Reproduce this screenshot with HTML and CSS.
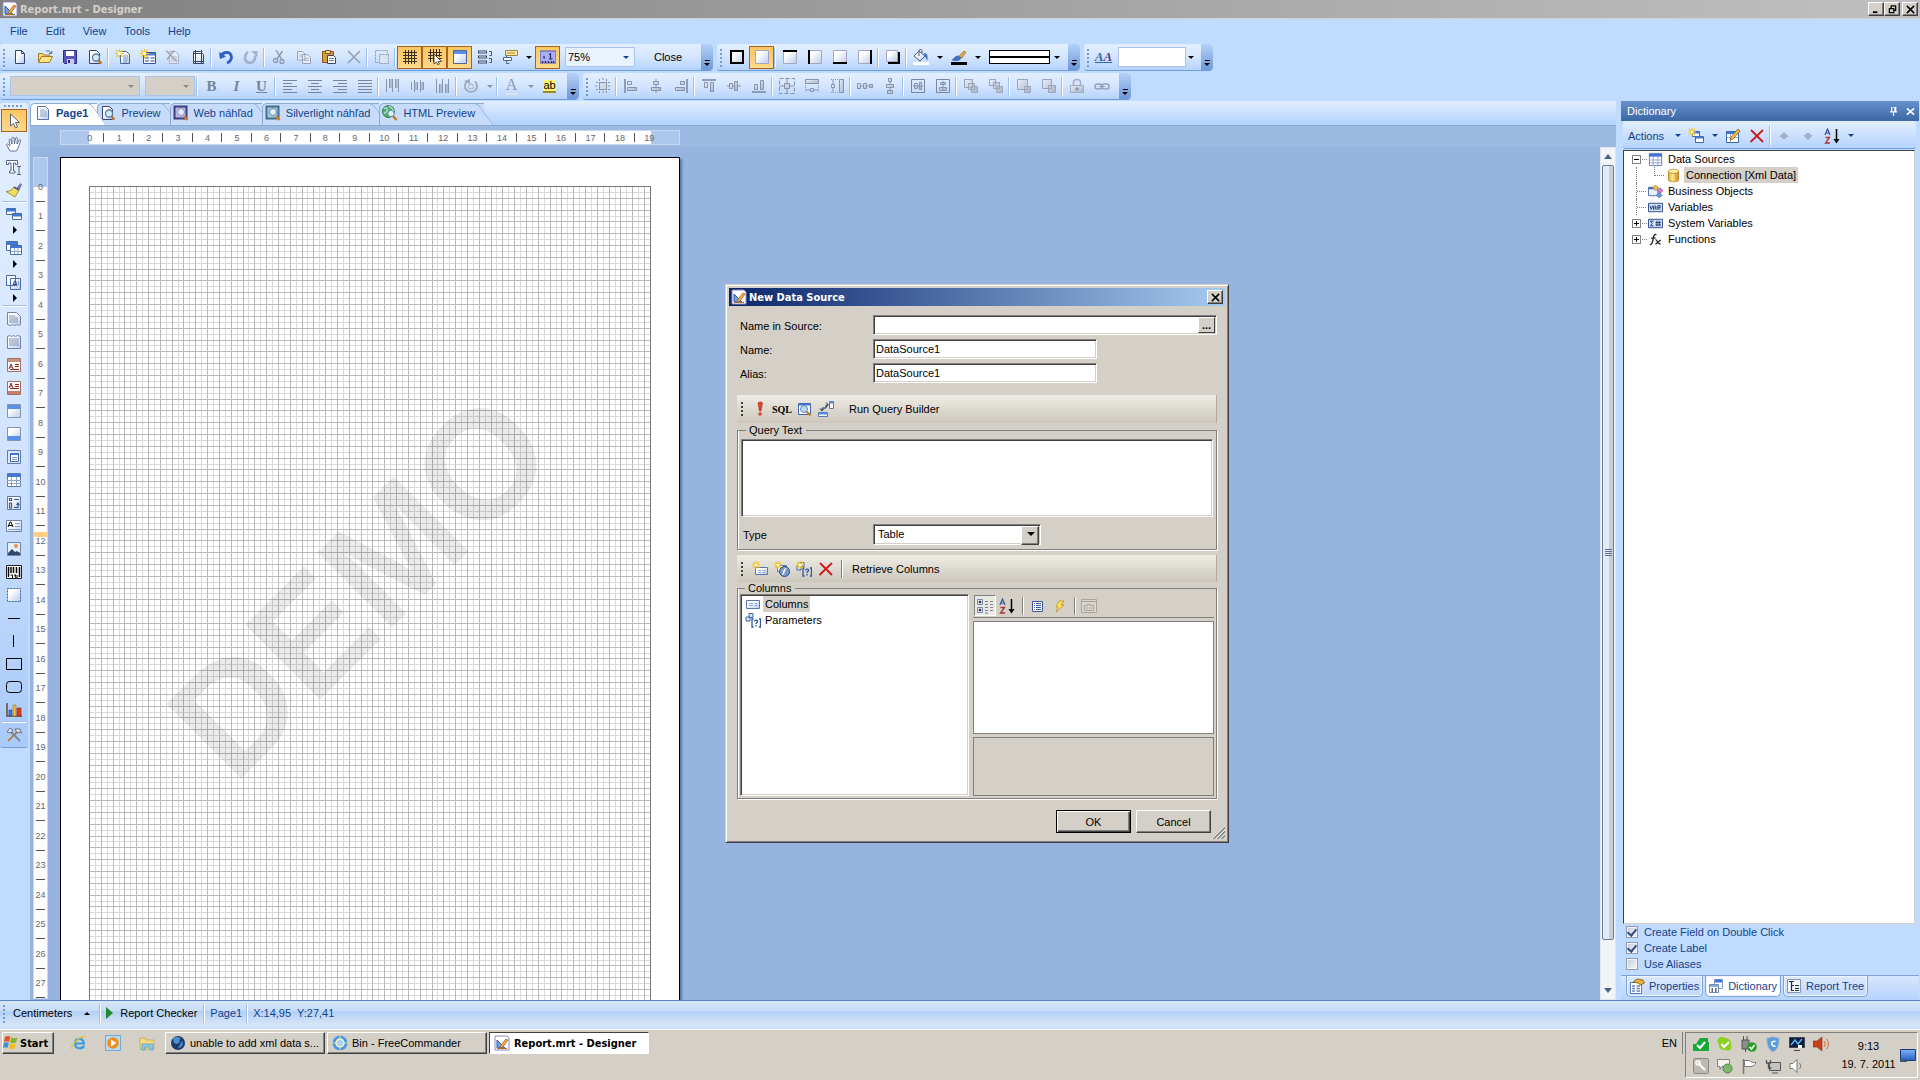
FILE: index.html
```html
<!DOCTYPE html>
<html lang="sk">
<head>
    <meta charset="utf-8">
    <title>Report.mrt - Designer</title>
    <link rel="stylesheet" href="styles.css">
</head>
<body>

<!-- Icon sprite -->
<svg class="sprite" aria-hidden="true">
    <defs>
        <linearGradient id="gPage" x1="0" y1="0" x2="1" y2="1"><stop offset="0.3" stop-color="#fff"/><stop offset="1" stop-color="#b9cbe8"/></linearGradient>
        <linearGradient id="gBlue" x1="0" y1="0" x2="0" y2="1"><stop offset="0" stop-color="#7fb0f5"/><stop offset="1" stop-color="#2b5fc0"/></linearGradient>
        <linearGradient id="gGold" x1="0" y1="0" x2="1" y2="0"><stop offset="0" stop-color="#e0a020"/><stop offset="0.4" stop-color="#ffec90"/><stop offset="1" stop-color="#c88610"/></linearGradient>
        <linearGradient id="gGray" x1="0" y1="0" x2="1" y2="1"><stop offset="0" stop-color="#e8eef8"/><stop offset="1" stop-color="#a9b4c6"/></linearGradient>
    </defs>
    <symbol id="app" viewBox="0 0 16 16"><path d="M1 1h12l2 2v12H1z" fill="#fff" stroke="#8b8bc0"/><path d="M3 5v8h8z" fill="#6aa2e8" stroke="#2b5fa8"/><path d="M7 10l5-6 2 1-5 7-3 1z" fill="#f4a640" stroke="#a0601c" stroke-width=".7"/><path d="M3 13.500h10" stroke="#b07020"/></symbol>
    <symbol id="new" viewBox="0 0 16 16"><path d="M3.500 1.500h6l3 3v10h-9z" fill="url(#gPage)" stroke="#34466e"/><path d="M9.500 1.500v3h3" fill="none" stroke="#34466e"/></symbol>
    <symbol id="open" viewBox="0 0 16 16"><path d="M1.500 13V4.500h4l1 1.500h6v2" fill="#f6d774" stroke="#a67c20"/><path d="M1.500 13.500l3-6h11l-3 6z" fill="#ffe48a" stroke="#a67c20"/><path d="M9 2.500c2-1.500 4-.5 4.500 1.500M14.800 2v2.500h-2.500" fill="none" stroke="#41609a"/></symbol>
    <symbol id="save" viewBox="0 0 16 16"><path d="M1.500 1.500h13v13h-12l-1-1z" fill="#5a58b8" stroke="#2c2b80"/><path d="M4 2h8v5H4z" fill="#fff"/><path d="M5 10h7v5H5z" fill="#c9cbe8"/><path d="M6 11h2v3H6z" fill="#2c2b80"/></symbol>
    <symbol id="preview" viewBox="0 0 16 16"><path d="M2.500 1.500h7l3 3v10h-10z" fill="url(#gPage)" stroke="#34466e"/><circle cx="9" cy="8.500" r="3.500" fill="#d4ecfa" fill-opacity=".9" stroke="#5a7da8" stroke-width="1.300"/><path d="M11.500 11.500l3 3" stroke="#c07820" stroke-width="2.400"/></symbol>
    <symbol id="star" viewBox="0 0 8 8"><path d="M4 0v8M0 4h8M1 1l6 6M7 1L1 7" stroke="#f0c020" stroke-width="1.100"/><circle cx="4" cy="4" r="1.500" fill="#fffbc0"/></symbol>
    <symbol id="newpage" viewBox="0 0 16 16"><path d="M5.500 2.500h6l3 3v9h-9z" fill="url(#gPage)" stroke="#4a6598"/><path d="M8 7h5M8 9h5M8 11h5M8 13h4" stroke="#7d97c4"/><use href="#star" width="9" height="9"/></symbol>
    <symbol id="newform" viewBox="0 0 16 16"><path d="M3.500 3.500h12v11h-12z" fill="#fff" stroke="#2e559c"/><path d="M4 4h11v2.500H4z" fill="#4f80d4"/><path d="M5 9h4M10.500 9h4M5 12h4M10.500 12h4" stroke="#6884b4" stroke-width="1.500"/><use href="#star" width="9" height="9"/></symbol>
    <symbol id="delpage" viewBox="0 0 16 16"><path d="M4.500 2.500h6l3 3v9h-9z" fill="#e4ebf5" stroke="#a9b2c2"/><path d="M6 8h6M6 10h6M6 12h6" stroke="#b5bdca"/><path d="M1 1.500l11 11M9 1.500l-7 9" stroke="#9ca5b5" stroke-width="1.300"/></symbol>
    <symbol id="pagesetup" viewBox="0 0 16 16"><path d="M3.500 2.500h7l3 3v9h-10z" fill="url(#gPage)" stroke="#34466e"/><path d="M5.500 1v14M11.500 1v14M3 4.500h9M3 12.500h11" stroke="#34466e"/></symbol>
    <symbol id="undo" viewBox="0 0 16 16"><path d="M3 7c2-4 8-5 10-1 1.500 3.500-1 7-4 8" fill="none" stroke="#2d5fc4" stroke-width="2.800"/><path d="M1 3l1 7 6-2.500z" fill="#2d5fc4"/></symbol>
    <symbol id="redo" viewBox="0 0 16 16"><path d="M5 3c-4 3-4 9 0 10.500s8-2 7-7" fill="none" stroke="#a3b2ca" stroke-width="2.600"/><path d="M8 2h6.500v6z" fill="#a3b2ca"/></symbol>
    <symbol id="cut" viewBox="0 0 16 16"><path d="M5 1l5.500 9M11.500 2L6 10" stroke="#8b97ab" stroke-width="1.400"/><circle cx="4.500" cy="11.500" r="2" fill="none" stroke="#8b97ab" stroke-width="1.300"/><circle cx="11" cy="12.500" r="2" fill="none" stroke="#8b97ab" stroke-width="1.300"/></symbol>
    <symbol id="copy" viewBox="0 0 16 16"><path d="M1.500 2.500h5l2.500 2.500v6H1.500zM6.500 5.500h5l3 3v6h-8z" fill="#e8eef8" stroke="#97a3b8"/><path d="M3 6h3M3 8h3M8 9.500h5M8 11.500h5" stroke="#b0bac9"/></symbol>
    <symbol id="paste" viewBox="0 0 16 16"><path d="M1.500 2.500h11v11h-11z" fill="#d99a3c" stroke="#82561a"/><path d="M4.500 1.500h5v3h-5z" fill="#f0dc90" stroke="#82561a"/><path d="M6.500 6.500h6l2 2v6h-8z" fill="#fff" stroke="#34466e"/><path d="M8 9.500h5M8 11.500h5" stroke="#6884b4"/></symbol>
    <symbol id="del" viewBox="0 0 16 16"><path d="M2 2l12 12M14 2L2 14" stroke="#97a0b0" stroke-width="1.600"/></symbol>
    <symbol id="selall" viewBox="0 0 16 16"><path d="M1.500 1.500h12v12h-12z" fill="none" stroke="#8f9bae" stroke-dasharray="2 1"/><path d="M5.500 5.500h9v9h-9z" fill="#dbe4f2" stroke="#8f9bae" stroke-dasharray="2 1"/></symbol>
    <symbol id="grid" viewBox="0 0 16 16"><path d="M3.500 1v14M6.500 1v14M9.500 1v14M12.500 1v14M1 3.500h14M1 6.500h14M1 9.500h14M1 12.500h14" stroke="#3a3020"/></symbol>
    <symbol id="snap" viewBox="0 0 16 16"><path d="M3.500 0v13M6.500 0v13M9.500 0v13M12.500 0v8M1 3.500h14M1 6.500h14M1 9.500h14" stroke="#3a3020"/><path d="M7 5v10l2.500-2 1.500 3 1.500-1-1.500-2.500h3.500z" fill="#fff" stroke="#3a3020" stroke-width=".8"/></symbol>
    <symbol id="headers" viewBox="0 0 16 16"><path d="M1.500 1.500h13v13h-13z" fill="url(#gPage)" stroke="#4a6598"/><path d="M2 2h12v3H2z" fill="#5a8fe8"/></symbol>
    <symbol id="order" viewBox="0 0 16 16"><path d="M1 3h9M1 8h9M1 13h9" stroke="#3c4862" stroke-width="3"/><path d="M2 3h7M2 8h7M2 13h7" stroke="#eef3fb"/><path d="M12 2.500h2.500v4H12.500M12 9.500h2.500v4H12.500" fill="none" stroke="#3c5a92"/></symbol>
    <symbol id="labels" viewBox="0 0 16 16"><path d="M3.500 1.500h12v5h-12z" fill="#ffe9a0" stroke="#a88432"/><path d="M5 4h8" stroke="#a88432"/><path d="M1.500 8.500h8v3h-8z" fill="#fff" stroke="#4a6598"/><path d="M4.500 6.500v2M4.500 11.500v3h3" fill="none" stroke="#4a6598"/></symbol>
    <symbol id="measure" viewBox="0 0 16 16"><path d="M0 2h16v12H0z" fill="#a8aef4" stroke="#5257b0"/><path d="M2.500 14v-2M5.500 14v-2M8.500 14v-2M11.500 14v-2M13.500 14v-2M10.500 4v6M9 5.500l1.500-1M9 10h3.500M4 7v2h1" fill="none" stroke="#26266c" stroke-width="1.200"/></symbol>

    <!-- Text formatting -->
    <symbol id="al" viewBox="0 0 16 16"><path d="M1 2.500h14M1 5.500h9M1 8.500h14M1 11.500h9M1 14.500h14" stroke="#76849c"/></symbol>
    <symbol id="ac" viewBox="0 0 16 16"><path d="M1 2.500h14M4 5.500h8M1 8.500h14M4 11.500h8M1 14.500h14" stroke="#76849c"/></symbol>
    <symbol id="ar" viewBox="0 0 16 16"><path d="M1 2.500h14M6 5.500h9M1 8.500h14M6 11.500h9M1 14.500h14" stroke="#76849c"/></symbol>
    <symbol id="aj" viewBox="0 0 16 16"><path d="M1 2.500h14M1 5.500h14M1 8.500h14M1 11.500h14M1 14.500h14" stroke="#76849c"/></symbol>
    <symbol id="vt" viewBox="0 0 16 16"><path d="M1.500 1v13M4.500 1v9M7.500 1v13M10.500 1v9M13.500 1v13M6 1v9M12 1v9" stroke="#8a96aa"/></symbol>
    <symbol id="vm" viewBox="0 0 16 16"><path d="M1.500 4v8M4.500 2v12M6 4v8M7.500 4v8M10.500 2v12M12 4v8M13.500 4v8" stroke="#8a96aa"/></symbol>
    <symbol id="vb" viewBox="0 0 16 16"><path d="M1.500 1v14M4.500 6v9M6 6v9M7.500 1v14M10.500 6v9M12 6v9M13.500 1v14" stroke="#8a96aa"/></symbol>
    <symbol id="rotate" viewBox="0 0 16 16"><path d="M4 3.500a6 6 0 1 0 8 0" fill="none" stroke="#a0abbc" stroke-width="2"/><circle cx="8" cy="8.500" r="2.500" fill="none" stroke="#a0abbc"/><path d="M1 3l6-2v5z" fill="#a0abbc"/></symbol>

    <!-- Borders and brushes -->
    <symbol id="ball" viewBox="0 0 16 16"><path d="M2 2h12v12H2z" fill="url(#gPage)" stroke="#000" stroke-width="2"/></symbol>
    <symbol id="bnone" viewBox="0 0 16 16"><path d="M1.500 1.500h13v13h-13z" fill="url(#gPage)" stroke="#a7a4c4"/></symbol>
    <symbol id="bt" viewBox="0 0 16 16"><use href="#bnone"/><path d="M1 2h14" stroke="#000" stroke-width="2"/></symbol>
    <symbol id="bl" viewBox="0 0 16 16"><use href="#bnone"/><path d="M2 1v14" stroke="#000" stroke-width="2"/></symbol>
    <symbol id="bb" viewBox="0 0 16 16"><use href="#bnone"/><path d="M1 14h14" stroke="#000" stroke-width="2"/></symbol>
    <symbol id="br" viewBox="0 0 16 16"><use href="#bnone"/><path d="M14 1v14" stroke="#000" stroke-width="2"/></symbol>
    <symbol id="bsh" viewBox="0 0 16 16"><path d="M3 3h12v12H3z" fill="#000"/><path d="M1.500 1.500h11v11h-11z" fill="url(#gPage)" stroke="#a7a4c4"/></symbol>
    <symbol id="fill" viewBox="0 0 16 16"><path d="M0 13h16v3H0z" fill="#fff"/><path d="M6 2l6 5-5 5-6-5z" fill="url(#gPage)" stroke="#4a5a80"/><path d="M6 7V1.500c0-1.500 3-1.500 3 0V4" fill="none" stroke="#4a5a80"/><path d="M11 4c3 0 4 2 3.500 7-1.500 0-1.500-3-3-4z" fill="#3f72c8"/></symbol>
    <symbol id="pen" viewBox="0 0 16 16"><path d="M0 13h16v3H0z" fill="#000"/><path d="M1 11c2 0 2-4 6-4l3 2c-1 3-5 3-9 2z" fill="#3f72c8" stroke="#25508e" stroke-width=".6"/><path d="M8 7l5-5 2 1-4 6z" fill="#e2a84c" stroke="#8a5c1c" stroke-width=".6"/></symbol>

    <!-- Alignment, all dimmed -->
    <symbol id="d0" viewBox="0 0 16 16"><path d="M4.500 4.500h7v7h-7z" fill="#d5dbe6" stroke="#8793a8"/><path d="M1 4.500h14M1 11.500h14M4.500 1v14M11.500 1v14M8 0v3M8 13v3M0 8h3M13 8h3" stroke="#8793a8" stroke-dasharray="2 1"/></symbol>
    <symbol id="d1" viewBox="0 0 16 16"><path d="M2 1v14" stroke="#7785a0" stroke-width="1.500"/><path d="M4.500 3.500h4v3h-4zM4.500 9.500h9v3h-9z" fill="url(#gGray)" stroke="#8793a8"/></symbol>
    <symbol id="d2" viewBox="0 0 16 16"><path d="M8 1v14" stroke="#8793a8"/><path d="M5.500 3.500h5v3h-5zM3.500 9.500h9v3h-9z" fill="url(#gGray)" stroke="#8793a8"/></symbol>
    <symbol id="d3" viewBox="0 0 16 16"><path d="M14 1v14" stroke="#7785a0" stroke-width="1.500"/><path d="M7.500 3.500h4v3h-4zM2.500 9.500h9v3h-9z" fill="url(#gGray)" stroke="#8793a8"/></symbol>
    <symbol id="d4" viewBox="0 0 16 16"><path d="M1 2h14" stroke="#7785a0" stroke-width="1.500"/><path d="M3.500 4.500h3v5h-3zM9.500 4.500h3v9h-3z" fill="url(#gGray)" stroke="#8793a8"/></symbol>
    <symbol id="d5" viewBox="0 0 16 16"><path d="M1 8h14" stroke="#8793a8"/><path d="M3.500 5.500h3v5h-3zM8.500 3.500h3v9h-3z" fill="url(#gGray)" stroke="#8793a8"/></symbol>
    <symbol id="d6" viewBox="0 0 16 16"><path d="M1 14h14" stroke="#7785a0" stroke-width="1.500"/><path d="M3.500 6.500h3v5h-3zM9.500 2.500h3v9h-3z" fill="url(#gGray)" stroke="#8793a8"/></symbol>
    <symbol id="d7" viewBox="0 0 16 16"><path d="M.5 .5h15v15H.5z" fill="none" stroke="#8793a8" stroke-dasharray="4 2"/><path d="M5.500 5.500h5v5h-5zM8 1v4M8 11v4M1 8h4M11 8h4" fill="url(#gGray)" stroke="#8793a8"/></symbol>
    <symbol id="d8" viewBox="0 0 16 16"><path d="M1.500 1.500h13v4h-13z" fill="url(#gGray)" stroke="#8793a8"/><path d="M1.500 7v7M14.500 7v7" stroke="#8793a8" stroke-dasharray="1 1"/><path d="M6.500 10.500h3v3h-3zM2 12h4M10 12h4" fill="none" stroke="#8793a8"/></symbol>
    <symbol id="d9" viewBox="0 0 16 16"><path d="M10.500 1.500h4v13h-4z" fill="url(#gGray)" stroke="#8793a8"/><path d="M2 1.500h7M2 14.500h7" stroke="#8793a8" stroke-dasharray="1 1"/><path d="M2.500 6.500h3v3h-3zM4 2v4M4 10v4" fill="none" stroke="#8793a8"/></symbol>
    <symbol id="d10" viewBox="0 0 16 16"><path d="M0 8h16" stroke="#8793a8"/><path d="M.5 5.500h3v5h-3zM6.500 5.500h3v5h-3zM12.500 6.500h3v3h-3z" fill="url(#gGray)" stroke="#8793a8"/></symbol>
    <symbol id="d11" viewBox="0 0 16 16"><path d="M8 0v16" stroke="#8793a8"/><path d="M6.500 .5h3v3h-3zM4.500 6.500h7v3h-7zM5.500 12.500h5v3h-5z" fill="url(#gGray)" stroke="#8793a8"/></symbol>
    <symbol id="d12" viewBox="0 0 16 16"><path d="M1.500 1.500h13v13h-13z" fill="none" stroke="#7785a0"/><path d="M3 8h10M4.500 5.500h3v5h-3zM9.500 4.500h2v7h-2z" fill="url(#gGray)" stroke="#8793a8"/></symbol>
    <symbol id="d13" viewBox="0 0 16 16"><path d="M1.500 1.500h13v13h-13z" fill="none" stroke="#7785a0"/><path d="M8 3v10M5.500 4.500h5v2h-5zM4.500 9.500h7v3h-7z" fill="url(#gGray)" stroke="#8793a8"/></symbol>
    <symbol id="d14" viewBox="0 0 16 16"><path d="M8.500 8.500h6v6h-6zM5.500 5.500h6v6h-6zM1.500 1.500h8v8h-8z" fill="url(#gGray)" stroke="#9aa5b8"/></symbol>
    <symbol id="d15" viewBox="0 0 16 16"><path d="M1.500 1.500h6v6h-6zM8.500 8.500h6v6h-6zM5.500 4.500h6v6h-6z" fill="url(#gGray)" stroke="#9aa5b8"/></symbol>
    <symbol id="d16" viewBox="0 0 16 16"><path d="M8.500 8.500h6v6h-6zM1.500 1.500h10v10h-10z" fill="url(#gGray)" stroke="#9aa5b8"/></symbol>
    <symbol id="d17" viewBox="0 0 16 16"><path d="M1.500 1.500h9v9h-9zM7.500 7.500h7v7h-7z" fill="url(#gGray)" stroke="#9aa5b8"/></symbol>
    <symbol id="lock" viewBox="0 0 16 16"><path d="M4.500 7V4.500c0-4 7-4 7 0V7" fill="none" stroke="#a2acbc" stroke-width="1.500"/><path d="M1.500 7.500h13v7h-13z" fill="url(#gGray)" stroke="#a2acbc"/><path d="M8 9v4M6 11h4" stroke="#7d899d"/></symbol>
    <symbol id="link" viewBox="0 0 16 16"><rect x="1" y="6" width="7" height="5" rx="2.500" fill="none" stroke="#97a2b5" stroke-width="1.500"/><rect x="8" y="6" width="7" height="5" rx="2.500" fill="none" stroke="#97a2b5" stroke-width="1.500"/><path d="M5 8.500h6" stroke="#97a2b5"/></symbol>

    <!-- Tabs -->
    <symbol id="tpage" viewBox="0 0 16 16"><path d="M2.500 1.500h8l3 3v10h-11z" fill="url(#gPage)" stroke="#5a74a8"/><path d="M5 5h5M5 7h7M5 9h7M5 11h7" stroke="#8ba3cc"/></symbol>
    <symbol id="tweb" viewBox="0 0 16 16"><path d="M1.500 1.500h12v12h-12z" fill="#b9b8e2" stroke="#3f3b84" stroke-width="2"/><circle cx="8" cy="7" r="3.500" fill="#dcecfa" stroke="#8c90b8"/><path d="M11 11l3.500 4" stroke="#d27c20" stroke-width="2.400"/></symbol>
    <symbol id="tsilver" viewBox="0 0 16 16"><path d="M1.500 1.500h12v12h-12z" fill="#a8cbe2" stroke="#3f7088" stroke-width="2"/><circle cx="8" cy="7" r="3.500" fill="#e4f4fc" stroke="#5a86a8"/><path d="M11 11l3.500 4" stroke="#d27c20" stroke-width="2.400"/></symbol>
    <symbol id="thtml" viewBox="0 0 16 16"><circle cx="6.500" cy="6.500" r="6" fill="#4fae54" stroke="#2c7a48"/><path d="M2 4c3-3 4 0 3 2s-2 1-3 3M7 1c2 1 4 3 5 5" fill="none" stroke="#a8d8f0" stroke-width="1.500"/><circle cx="9" cy="8.500" r="3.200" fill="#dcf0fa" stroke="#6a8cae"/><path d="M11 11l3.500 4" stroke="#c07820" stroke-width="2.400"/></symbol>

    <!-- Palette -->
    <symbol id="cursor" viewBox="0 0 16 16"><path d="M4.500 1v12l3-2.500 2 4.500 2-1-2-4.500h4z" fill="#fff" stroke="#56617c"/></symbol>
    <symbol id="hand" viewBox="0 0 16 16"><path d="M4 15l-3.500-6c0-1 1-1.500 2-.5L4 10 3 4c0-1 1.500-1 2 0l1 4V2c0-1 2-1 2 0l.5 6L9.500 2c.5-1 2-1 1.800.5L11 8l2-4c1-1 2 0 1.500 1l-2 6-2 4z" fill="#fff" stroke="#56678e" stroke-width=".9"/></symbol>
    <symbol id="texttool" viewBox="0 0 16 16"><path d="M.5 1.500h11v4H9.500v-1.500h-2v8h1.500v2H3.500v-2H5V4H2.500v1.500H.5z" fill="#fff" stroke="#56678e"/><path d="M11 7.500h4M11 15.500h4M13 7.500v8" stroke="#56678e"/></symbol>
    <symbol id="broom" viewBox="0 0 16 16"><path d="M11 6l3.500-4.500 1 1L13 8z" fill="#8487b0" stroke="#55587c" stroke-width=".7"/><path d="M8 5l5 3-4 7L0 9.500c4 0 6-2 8-4.500z" fill="#f2da5a" stroke="#8d7d3a" stroke-width=".8"/><path d="M8 5l5 3" stroke="#55587c" stroke-width="1.500"/></symbol>
    <symbol id="bands" viewBox="0 0 16 16"><path d="M.5 2.500h9v6h-9z" fill="#fff" stroke="#486ca8"/><path d="M1 3h8v2.500H1z" fill="#3f76d8"/><path d="M6.500 7.500h9v6h-9z" fill="#fff" stroke="#486ca8"/><path d="M7 8h8v2.500H7z" fill="#3f76d8"/></symbol>
    <symbol id="cross" viewBox="0 0 16 16"><path d="M.5 1.500h11v9h-11z" fill="#fff" stroke="#486ca8"/><path d="M1 2h10v3H1z" fill="#3f76d8"/><path d="M4.500 5.500h11v9h-11z" fill="#fff" stroke="#486ca8"/><path d="M5 6h10v2H5z" fill="#3f76d8"/><path d="M5 11.500h10M8.500 8v6M12 8v6" stroke="#90a8d0"/></symbol>
    <symbol id="comps" viewBox="0 0 16 16"><path d="M.5 1.500h9v10h-9zM4.500 4.500h10v11h-10z" fill="url(#gPage)" stroke="#486ca8"/><path d="M7 12l1.500-5h1L11 12M7.500 10.500h3M12 8h1M12 10h1" fill="none" stroke="#244a94"/></symbol>
    <symbol id="rtitle" viewBox="0 0 16 16"><path d="M1.500 1.500h9l4 4v8l-2 1-2-1-2 1-2-1-2 1-3-1z" fill="url(#gPage)" stroke="#7085a8"/><path d="M3 5h6M3 7h9M3 9h9M3 11h9" stroke="#7f92b2"/></symbol>
    <symbol id="rsum" viewBox="0 0 16 16"><path d="M1.500 2.500l2-1 2 1 2-1 2 1 2-1 3 1v12h-13z" fill="url(#gPage)" stroke="#7085a8"/><path d="M3 5h10M3 7h10M3 9h10M3 11h10" stroke="#7f92b2"/></symbol>
    <symbol id="phead" viewBox="0 0 16 16"><path d="M1.500 1.500h13v13h-13z" fill="#fff" stroke="#a4705c"/><path d="M2 2h12v3H2z" fill="#cc9478"/><path d="M3 12l2-5 2 5M4 10h2M9 7.500h4M9 9.500h4M4 12.500h9" fill="none" stroke="#8e2a1c"/></symbol>
    <symbol id="pfoot" viewBox="0 0 16 16"><path d="M1.500 1.500h13v13h-13z" fill="#fff" stroke="#a4705c"/><path d="M2 11h12v3H2z" fill="#cc7c6c"/><path d="M3 8l2-5 2 5M4 6h2M9 4.500h4M9 6.500h4M4 8.500h9" fill="none" stroke="#8e2a1c"/></symbol>
    <symbol id="bhead" viewBox="0 0 16 16"><path d="M1.500 1.500h13v13h-13z" fill="url(#gPage)" stroke="#8394b4"/><path d="M2 2h12v4H2z" fill="#5a90ea"/></symbol>
    <symbol id="bfoot" viewBox="0 0 16 16"><path d="M1.500 1.500h13v13h-13z" fill="url(#gPage)" stroke="#8394b4"/><path d="M2 10h12v4H2z" fill="#5a90ea"/></symbol>
    <symbol id="bdata" viewBox="0 0 16 16"><path d="M1.500 1.500h13v13h-13z" fill="#dbe6f6" stroke="#5f7cb0"/><path d="M4.500 4.500h8v8h-8z" fill="#fff" stroke="#3d65a8"/><path d="M4 5h9" stroke="#3f76d8" stroke-width="2"/><path d="M6 8.500h5M6 10.500h5" stroke="#7f92b2"/></symbol>
    <symbol id="table" viewBox="0 0 16 16"><path d="M1.500 1.500h13v13h-13z" fill="#fff" stroke="#5f7cb0"/><path d="M1 2h14v3H1z" fill="#3f76d8"/><path d="M1 8.500h14M1 11.500h14M5.500 5v9M10.500 5v9" stroke="#8fa6cc"/></symbol>
    <symbol id="crosstab" viewBox="0 0 16 16"><path d="M1.500 1.500h13v13h-13z" fill="url(#gPage)" stroke="#5f7cb0"/><path d="M3.500 3.500h2v2h-2zM8 4.500h5M3.500 8v5h2V8zM8 12.500h4v-4M10.500 10l1.500-2 1.500 2" fill="none" stroke="#3d5a92" stroke-width="1.200"/></symbol>
    <symbol id="tbox" viewBox="0 0 16 16"><path d="M.5 2.500h15v11H.5z" fill="url(#gPage)" stroke="#7085a8"/><path d="M2 9l2-5h1l2 5M3 7.500h3" fill="none" stroke="#000"/><path d="M9 5.500h5M9 8.500h5M2 11.500h12" stroke="#8ba3cc"/></symbol>
    <symbol id="image" viewBox="0 0 16 16"><path d="M1.500 1.500h13v13h-13z" fill="#e4eefc" stroke="#7085a8"/><circle cx="10" cy="5" r="2" fill="#f0904c"/><path d="M2 14v-2l4-4 3 3 2-1 3 2v2z" fill="#33446c"/></symbol>
    <symbol id="barcode" viewBox="0 0 16 16"><path d="M.5 1.500h15v13H.5z" fill="#fff" stroke="#222"/><path d="M2.500 3v10M5 3v6M7.500 3v6M10.500 3v6M13.500 3v10" stroke="#000" stroke-width="1.500"/><path d="M4.500 11h2v3M8 11h2l-1 1 1 2M11 11v3" fill="none" stroke="#000"/></symbol>
    <symbol id="panel" viewBox="0 0 16 16"><path d="M1.500 1.500h13v13h-13z" fill="url(#gPage)" stroke="#3a64a8" stroke-dasharray="2 1"/></symbol>
    <symbol id="hline" viewBox="0 0 16 16"><path d="M2 8.500h12" stroke="#000"/></symbol>
    <symbol id="vline" viewBox="0 0 16 16"><path d="M7.500 2v12" stroke="#000"/></symbol>
    <symbol id="rect" viewBox="0 0 16 16"><path d="M.5 2.500h15v11H.5z" fill="none" stroke="#000"/></symbol>
    <symbol id="rrect" viewBox="0 0 16 16"><rect x=".5" y="2.500" width="15" height="11" rx="3" fill="none" stroke="#000"/></symbol>
    <symbol id="chart" viewBox="0 0 16 16"><path d="M1 1v13h15" fill="none" stroke="#6d4a30" stroke-width="1.500"/><path d="M3 8h3v6H3z" fill="#3f76d8" stroke="#284a8c" stroke-width=".6"/><path d="M7 3h3v11H7z" fill="#f2c030" stroke="#94701c" stroke-width=".6"/><path d="M11 6h4v8h-4z" fill="#dc3c24" stroke="#8c2010" stroke-width=".6"/></symbol>
    <symbol id="tools" viewBox="0 0 16 16"><path d="M2 14l9-9" stroke="#b8863c" stroke-width="1.800"/><path d="M4 4l10 10" stroke="#7a8698" stroke-width="1.800"/><path d="M1 5l3-4 3 2-2 3zM9 2l5 0 1.500 4-2.500-1-2 1z" fill="#dfe4ec" stroke="#4d586c" stroke-width=".8"/></symbol>

    <!-- Dictionary -->
    <symbol id="newitem" viewBox="0 0 16 16"><path d="M4.500 3.500h7v5h-7zM7.500 8.500h8v6h-8z" fill="#fff" stroke="#3d65a8"/><path d="M5 4.500h6M8 9.500h7" stroke="#3f76d8" stroke-width="2"/><use href="#star" width="8" height="8"/></symbol>
    <symbol id="edit" viewBox="0 0 16 16"><path d="M1.500 3.500h12v11h-12z" fill="#fff" stroke="#3d65a8"/><path d="M2 5h11" stroke="#3f76d8" stroke-width="2"/><path d="M2 9.500h11M5.500 6v8" stroke="#9db2d8"/><path d="M5 12l1-3 7-8 2 2-7 8z" fill="#f2c030" stroke="#82602a" stroke-width=".8"/></symbol>
    <symbol id="redx" viewBox="0 0 16 16"><path d="M2 2l12 12M14 2L1.500 14" stroke="#d01818" stroke-width="1.800"/></symbol>
    <symbol id="up" viewBox="0 0 16 16"><path d="M8 4l5 5H10v2H6V9H3z" fill="#a3afc4"/></symbol>
    <symbol id="down" viewBox="0 0 16 16"><path d="M8 12l5-5H10V5H6v2H3z" fill="#a3afc4"/></symbol>
    <symbol id="sort" viewBox="0 0 16 16"><path d="M1 7l2.500-6L6 7M2 5h3" fill="none" stroke="#34509c" stroke-width="1.200"/><path d="M1.500 9.500h4l-4 5.500h4.500" fill="none" stroke="#a83434" stroke-width="1.300"/><path d="M12.500 1v12" stroke="#000" stroke-width="1.500"/><path d="M9.500 11h6l-3 4.500z"/></symbol>
    <symbol id="db" viewBox="0 0 16 16"><path d="M2.500 3.500v9c0 3 11 3 11 0v-9z" fill="url(#gGold)" stroke="#a87010" stroke-width=".7"/><ellipse cx="8" cy="3.500" rx="5.500" ry="2.200" fill="#fff0a8" stroke="#a87010" stroke-width=".7"/></symbol>
    <symbol id="bo" viewBox="0 0 16 16"><path d="M.5 3.500h10v9H.5z" fill="#e8eefa" stroke="#4f6cae"/><path d="M1 4.500h9" stroke="#3f5fd8" stroke-width="2"/><path d="M5 4l3-3 3 3-3 3z" fill="#f2c030" stroke="#9c7218" stroke-width=".6"/><path d="M10 7l3-3 3 3-3 3z" fill="#d878d8" stroke="#8a3c8a" stroke-width=".6"/><path d="M9 12l3-3 3 3-3 3z" fill="#5aa0e8" stroke="#2c5ca0" stroke-width=".6"/></symbol>
    <symbol id="var" viewBox="0 0 16 16"><path d="M.5 3.500h15v9H.5z" fill="#d5e0f2" stroke="#274888"/><path d="M2 6l1.500 4L5 6M6 10.500V7l1-1 1.500 1v3.500M6 8.500h2.500M10.500 10.500v-4.500h2.500v2h-2l2 2.500" fill="none" stroke="#1e3c78"/></symbol>
    <symbol id="sysvar" viewBox="0 0 16 16"><path d="M.5 3.500h15v9H.5z" fill="#d5e0f2" stroke="#274888"/><path d="M6 5.500H2.500L4.500 8l-2 2.500H6M9.500 5v6M12 5v6M8 7h6M8 9.500h6" fill="none" stroke="#1e3c78"/></symbol>
    <symbol id="fx" viewBox="0 0 16 16"><path d="M9 3c-2-1.500-3 1-3.500 4S4.500 14 2 13.500M3.500 6.500h4.500M8 8.500c2-1 2 5 5.500 4M13.500 8.500L8 13" fill="none" stroke="#222" stroke-width="1.400"/></symbol>
    <symbol id="props" viewBox="0 0 16 16"><path d="M1.500 4.500h11v11h-11z" fill="#fff" stroke="#5f7cb0"/><path d="M3 8h3M7.500 8H11M3 10.500h3M7.500 10.500H11M3 13h3M7.500 13H11" stroke="#6884b4" stroke-width="1.300"/><path d="M4 4l4-3 6 1 1.500 3-4 2L9 5z" fill="#e8b030" stroke="#74581c" stroke-width=".8"/></symbol>
    <symbol id="dict" viewBox="0 0 16 16"><path d="M6.500 1.500h8v9h-8z" fill="#fff" stroke="#7f98cc"/><path d="M7 3h7" stroke="#3f76d8" stroke-width="3"/><path d="M1.500 6.500h9v8h-9z" fill="#fff" stroke="#7088bc"/><path d="M2 8h8" stroke="#8aa8dc" stroke-width="2"/><path d="M3.500 11h1.500M7 11h1.500M3.500 13h1.500M7 13h1.500" stroke="#24345c" stroke-width="1.300"/></symbol>
    <symbol id="rtree" viewBox="0 0 16 16"><path d="M1.500 1.500h13v13h-13z" fill="#f2f5fa" stroke="#8a96ac"/><path d="M3 3.500h5M5.500 4v8.500H8M5.500 7.500H8M9 7.500h4M9 10.500h4M9 12.500h4" fill="none" stroke="#1e2e4c" stroke-width="1.200"/></symbol>

    <!-- Dialog -->
    <symbol id="run" viewBox="0 0 16 16"><path d="M6 2c1-1.500 4-1.500 4.500 0L9 10H7.500z" fill="#e04428" stroke="#a82c14" stroke-width=".6"/><circle cx="8" cy="13" r="1.800" fill="#e04428"/></symbol>
    <symbol id="qview" viewBox="0 0 16 16"><path d="M2.500 2.500h12v11h-12z" fill="#fff" stroke="#3d65a8"/><path d="M3 3.500h11" stroke="#3f76d8" stroke-width="2"/><circle cx="8" cy="8" r="3.500" fill="#b8d8f4" stroke="#6888b0"/><path d="M10.500 10.500l4 4" stroke="#c07820" stroke-width="2"/></symbol>
    <symbol id="qbuild" viewBox="0 0 16 16"><path d="M11.500 .5h4v7h-4zM.5 11.500h9v4h-9z" fill="#fff" stroke="#5878b0"/><path d="M12 1.500h3M1 12.500h8" stroke="#5a8ae0" stroke-width="2"/><path d="M4 10V7h4V4h2M2 7.500L4 10l2-2.500M8 1.500L10.500 4 8 6" fill="none" stroke="#2a3c60"/></symbol>
    <symbol id="col" viewBox="0 0 16 16"><path d="M1.500 4.500h13v8h-13z" fill="url(#gPage)" stroke="#5878b0"/><path d="M4 7.500h4M4 9.500h4M9.500 7.500h3M9.500 9.500h3" stroke="#8aaae4"/></symbol>
    <symbol id="newcol" viewBox="0 0 16 16"><path d="M3.500 6.500h12v7h-12z" fill="url(#gPage)" stroke="#5878b0"/><path d="M6 9.500h3M6 11.500h3M10.500 9.500h3M10.500 11.500h3" stroke="#8aaae4"/><use href="#star" width="8" height="8"/></symbol>
    <symbol id="newcalc" viewBox="0 0 16 16"><path d="M3.500 4.500h9v6h-9z" fill="#fff" stroke="#5878b0"/><use href="#star" width="8" height="8"/><circle cx="10.500" cy="10.500" r="5" fill="#7898c8" stroke="#304c80"/><path d="M12.500 8c-2-1-2 1-2.500 3s-1 2.500-2 2M8.500 10h3" fill="none" stroke="#fff" stroke-width="1.200"/></symbol>
    <symbol id="param" viewBox="0 0 16 16"><path d="M1 5h4v4H1zM4 1.500h4v4H4z" fill="#dce8fa" stroke="#3d65a8"/><path d="M8.500 7H7v8h1.500M14 7h1.500v8H14M9.500 9.500c0-2 3.500-1.500 3 0s-1.500 1-1.500 2.500M11 13v1.500" fill="none" stroke="#2c5898" stroke-width="1.300"/></symbol>
    <symbol id="newparam" viewBox="0 0 16 16"><use href="#param"/><use href="#star" width="8" height="8"/></symbol>
    <symbol id="categ" viewBox="0 0 16 16"><path d="M.5 1.500h5v5h-5zM.5 9.500h5v5h-5z" fill="#fff" stroke="#7088b8"/><path d="M1.500 4h3M3 2.500v3M1.500 12h3M3 10.500v3" stroke="#000"/><path d="M8 3.500h3M8 6.500h3M8 9.500h3M8 12.500h3M8 15h3M13 3.500h3M13 6.500h3M13 9.500h3M13 12.500h3" stroke="#7c8088"/></symbol>
    <symbol id="list" viewBox="0 0 16 16"><path d="M3.500 3.500h10v10h-10z" fill="#fff" stroke="#3d5a98"/><path d="M5 5.500h1M5 7.500h1M5 9.500h1M5 11.500h1M7 5.500h5M7 7.500h5M7 9.500h5M7 11.500h5" stroke="#3d5a98"/></symbol>
    <symbol id="bolt" viewBox="0 0 16 16"><path d="M8 3h5l-3 4h3l-8 7 2-5H5z" fill="#ffe254" stroke="#b08a20" stroke-width=".7"/></symbol>
    <symbol id="ppage" viewBox="0 0 16 16"><path d="M.5 1.500h15v13H.5z" fill="#dad6ce" stroke="#a8a49c"/><path d="M1 3.500h14M3.500 7.500h3v-1h3v1h3v5h-9z" fill="none" stroke="#a8a49c"/><path d="M5 10h2M8 10h3" stroke="#a8a49c"/></symbol>

    <!-- Taskbar -->
    <symbol id="flag" viewBox="0 0 16 16"><path d="M2 2c2-1.500 4-1 5.500 0L6 7C4.500 6 3 6 1 7z" fill="#e8541c"/><path d="M8.500 2.500c2 1 4 1 6 0L13 7.500c-2 1-4 1-6 0z" fill="#7cb828"/><path d="M.8 8c2-1 3.500-1 5 0L4.500 13C3 12 1.500 12 0 13z" fill="#3c8ce0"/><path d="M7 8.500c2 1 4 1 6 0l-1.500 5c-2 1-4 1-6 0z" fill="#f8bc1c"/></symbol>
    <symbol id="ie" viewBox="0 0 16 16"><path d="M13 10.500c-1.500 4-9 4-9-2s8-6.500 9 0H4.500" fill="none" stroke="#3a9ce0" stroke-width="2.200"/><path d="M1 14.500c-2-4 8-14 14-13" fill="none" stroke="#f0c030" stroke-width="1.200"/></symbol>
    <symbol id="wmp" viewBox="0 0 16 16"><path d="M.5 .5h15v15H.5z" fill="#b4dcf4" stroke="#74a8cc"/><circle cx="8" cy="8" r="5.800" fill="#f48c1c"/><path d="M6 4.500l5.500 3.500L6 11.500z" fill="#fff"/></symbol>
    <symbol id="explorer" viewBox="0 0 16 16"><path d="M1 3h5l1 2h8v9H1z" fill="#f6dc84" stroke="#c09c40" stroke-width=".7"/><path d="M3 9h11v6h-3v-3H6v3H3z" fill="#8ccce8" stroke="#5490b4" stroke-width=".7"/></symbol>
    <symbol id="ff" viewBox="0 0 16 16"><circle cx="8" cy="8" r="7" fill="#1c3c70"/><path d="M3 3c3-2 7-1 8 1-2 0-2 2-1 3l-3 2-3-1zM12 6c2 3 0 7-4 7" fill="#4c90cc"/></symbol>
    <symbol id="fc" viewBox="0 0 16 16"><circle cx="8" cy="8" r="7.500" fill="#4898e4"/><circle cx="8" cy="8" r="4" fill="#a8d4f8" stroke="#fff2b8" stroke-width="1.500"/><path d="M8 0v3M8 13v3M0 8h3M13 8h3" stroke="#f0d880"/></symbol>
    <symbol id="t1" viewBox="0 0 16 16"><path d="M0 8h3l4-6 8 0v4h1v9H0z" fill="#18a838"/><path d="M4 9l3 3 5-6" fill="none" stroke="#fff" stroke-width="2"/></symbol>
    <symbol id="t2" viewBox="0 0 16 16"><path d="M1 3c2-3 6-2 7-1 5 0 7 4 6 7 2 3-1 7-5 5C4 15 1 11 2 8 0 6 0 4 1 3z" fill="#8cd020"/><path d="M4.500 8l2.500 3 5-5" fill="none" stroke="#fff" stroke-width="2"/></symbol>
    <symbol id="t3" viewBox="0 0 16 16"><path d="M1 4h7v9H1zM2.500 0v4M6 0v4M4.500 13v3" fill="#8c8c8c" stroke="#555"/><circle cx="11" cy="11" r="4.800" fill="#28a028"/><path d="M8.500 11l2 2 3-4" fill="none" stroke="#fff" stroke-width="1.500"/></symbol>
    <symbol id="t4" viewBox="0 0 16 16"><path d="M2 2c4 0 4-1 6-1s2 1 6 1c0 7-1 11-6 14C3 13 2 9 2 2z" fill="#5a9cdc" stroke="#9ab0c8"/><path d="M10.500 5.500c-5-2-5 6 0 4.500" fill="none" stroke="#fff" stroke-width="1.500"/></symbol>
    <symbol id="t5" viewBox="0 0 16 16"><path d="M.5 1.500h15v10H.5zM5 14.500h6" fill="#0c1c3c" stroke="#445"/><path d="M2 9l4-5 3 4 4-5" fill="none" stroke="#58b4f4" stroke-width="1.500"/><path d="M9 9h4v3H9z" fill="#fff"/></symbol>
    <symbol id="t6" viewBox="0 0 16 16"><path d="M0 5h4l5-4v14l-5-4H0z" fill="#c8401c" stroke="#8c2810" stroke-width=".6"/><path d="M11 5c1.500 2 1.500 4 0 6M13.500 3c2.500 3 2.500 7 0 10" fill="none" stroke="#d86030"/></symbol>
    <symbol id="t7" viewBox="0 0 16 16"><rect x=".5" y=".5" width="15" height="15" rx="1" fill="#bdbab4" stroke="#8c8984"/><path d="M5 5l7 7" stroke="#fff" stroke-width="2"/><circle cx="5" cy="5" r="2" fill="none" stroke="#fff" stroke-width="1.500"/></symbol>
    <symbol id="t8" viewBox="0 0 16 16"><path d="M.5 1.500h12v7H5l-2 3v-3H.5z" fill="#f4f2ee" stroke="#808080"/><circle cx="10.500" cy="10.500" r="4.500" fill="#78b868" stroke="#4c8840"/></symbol>
    <symbol id="t9" viewBox="0 0 16 16"><path d="M2.500 1v15" stroke="#777" stroke-width="1.500"/><path d="M3.500 2.500h5c1.500 2 4 2 6.500 2-1 3-3 4-6 4h-5.500z" fill="#fff" stroke="#777"/></symbol>
    <symbol id="t10" viewBox="0 0 16 16"><path d="M4.500 4.500h11v8h-11zM7 15h6" fill="#c4c4c4" stroke="#555"/><path d="M1.500 2v3h4V2M3.500 5v5h3" fill="none" stroke="#555" stroke-width="1.300"/></symbol>
    <symbol id="t11" viewBox="0 0 16 16"><path d="M1 5.500h3l4-4v13l-4-4H1z" fill="#fff" stroke="#777"/><path d="M10.500 5c1.500 2 1.500 4 0 6" fill="none" stroke="#777"/></symbol>
    <symbol id="desk" viewBox="0 0 16 16"><path d="M.5 2.500h15v11H.5z" fill="url(#gBlue)" stroke="#1c3c78"/><path d="M0 12h7v3H0z" fill="#38587c"/></symbol>
</svg>

<header class="titlebar">
    <svg class="icon"><use href="#app"/></svg>
    <h1>Report.mrt - Designer</h1>
    <div class="winbtns">
        <button class="winbtn" aria-label="Minimize"><svg viewBox="0 0 10 10"><path d="M1 8h5" stroke="#000" stroke-width="2"/></svg></button>
        <button class="winbtn" aria-label="Restore"><svg viewBox="0 0 10 10"><path d="M3 1h6M3.500 1v3M8.500 1v5H7M1 4h6M1.500 4v4.500h5V4" fill="none" stroke="#000" stroke-width="1.400"/></svg></button>
        <button class="winbtn close" aria-label="Close window"><svg viewBox="0 0 10 10"><path d="M1 1l8 8M9 1L1 9" stroke="#000" stroke-width="1.700"/></svg></button>
    </div>
</header>

<nav class="menubar">
    <a href="#file">File</a>
    <a href="#edit-menu">Edit</a>
    <a href="#view">View</a>
    <a href="#tools-menu">Tools</a>
    <a href="#help">Help</a>
</nav>

<div class="toolbars">
    <div class="toolrow">
        <div class="toolbar">
            <button class="tb" aria-label="New"><svg class="icon"><use href="#new"/></svg></button>
            <button class="tb" aria-label="Open"><svg class="icon"><use href="#open"/></svg></button>
            <button class="tb" aria-label="Save"><svg class="icon"><use href="#save"/></svg></button>
            <button class="tb" aria-label="Print preview"><svg class="icon"><use href="#preview"/></svg></button>
            <i class="sep"></i>
            <button class="tb" aria-label="New page"><svg class="icon"><use href="#newpage"/></svg></button>
            <button class="tb" aria-label="New form"><svg class="icon"><use href="#newform"/></svg></button>
            <button class="tb" aria-label="Delete page"><svg class="icon"><use href="#delpage"/></svg></button>
            <button class="tb" aria-label="Page setup"><svg class="icon"><use href="#pagesetup"/></svg></button>
            <i class="sep"></i>
            <button class="tb" aria-label="Undo"><svg class="icon"><use href="#undo"/></svg></button>
            <button class="tb" aria-label="Redo"><svg class="icon"><use href="#redo"/></svg></button>
            <i class="sep"></i>
            <button class="tb" aria-label="Cut"><svg class="icon"><use href="#cut"/></svg></button>
            <button class="tb" aria-label="Copy"><svg class="icon"><use href="#copy"/></svg></button>
            <button class="tb" aria-label="Paste"><svg class="icon"><use href="#paste"/></svg></button>
            <button class="tb" aria-label="Delete"><svg class="icon"><use href="#del"/></svg></button>
            <i class="sep"></i>
            <button class="tb" aria-label="Select all"><svg class="icon"><use href="#selall"/></svg></button>
            <i class="sep"></i>
            <button class="tb on" aria-label="Show grid"><svg class="icon"><use href="#grid"/></svg></button>
            <button class="tb on" aria-label="Align to grid"><svg class="icon"><use href="#snap"/></svg></button>
            <button class="tb on" aria-label="Show headers"><svg class="icon"><use href="#headers"/></svg></button>
            <button class="tb" aria-label="Show order"><svg class="icon"><use href="#order"/></svg></button>
            <button class="tb" aria-label="Quick info"><svg class="icon"><use href="#labels"/></svg></button>
            <button class="drop" aria-label="Quick info options"></button>
            <button class="tb on" aria-label="Show rulers"><svg class="icon"><use href="#measure"/></svg></button>
            <label class="combo zoom"><select aria-label="Zoom"><option>75%</option></select></label>
            <button class="textbtn">Close</button>
            <button class="more" aria-label="More standard buttons"></button>
        </div>
        <div class="toolbar">
            <button class="tb" aria-label="All borders"><svg class="icon"><use href="#ball"/></svg></button>
            <button class="tb on" aria-label="No border"><svg class="icon"><use href="#bnone"/></svg></button>
            <i class="sep"></i>
            <button class="tb" aria-label="Top border"><svg class="icon"><use href="#bt"/></svg></button>
            <button class="tb" aria-label="Left border"><svg class="icon"><use href="#bl"/></svg></button>
            <button class="tb" aria-label="Bottom border"><svg class="icon"><use href="#bb"/></svg></button>
            <button class="tb" aria-label="Right border"><svg class="icon"><use href="#br"/></svg></button>
            <i class="sep"></i>
            <button class="tb" aria-label="Shadow"><svg class="icon"><use href="#bsh"/></svg></button>
            <i class="sep"></i>
            <button class="tb" aria-label="Background color"><svg class="icon"><use href="#fill"/></svg></button>
            <button class="drop" aria-label="Background color options"></button>
            <button class="tb" aria-label="Border color"><svg class="icon"><use href="#pen"/></svg></button>
            <button class="drop" aria-label="Border color options"></button>
            <button class="linestyle" aria-label="Border style"></button>
            <button class="drop" aria-label="Border style options"></button>
            <button class="more push" aria-label="More border buttons"></button>
        </div>
        <div class="toolbar">
            <button class="tb" aria-label="Style designer"><span class="glyph aa">A<b>A</b></span></button>
            <label class="combo style"><select aria-label="Style"><option></option></select></label>
            <button class="more push" aria-label="More style buttons"></button>
        </div>
    </div>

    <div class="toolrow">
        <div class="toolbar">
            <label class="combo off font"><select aria-label="Font name" disabled><option></option></select></label>
            <label class="combo off size"><select aria-label="Font size" disabled><option></option></select></label>
            <i class="sep"></i>
            <button class="tb" aria-label="Bold"><span class="glyph b">B</span></button>
            <button class="tb" aria-label="Italic"><span class="glyph i">I</span></button>
            <button class="tb" aria-label="Underline"><span class="glyph u">U</span></button>
            <i class="sep"></i>
            <button class="tb" aria-label="Align left"><svg class="icon"><use href="#al"/></svg></button>
            <button class="tb" aria-label="Align center"><svg class="icon"><use href="#ac"/></svg></button>
            <button class="tb" aria-label="Align right"><svg class="icon"><use href="#ar"/></svg></button>
            <button class="tb" aria-label="Justify"><svg class="icon"><use href="#aj"/></svg></button>
            <i class="sep"></i>
            <button class="tb" aria-label="Align top"><svg class="icon"><use href="#vt"/></svg></button>
            <button class="tb" aria-label="Align middle"><svg class="icon"><use href="#vm"/></svg></button>
            <button class="tb" aria-label="Align bottom"><svg class="icon"><use href="#vb"/></svg></button>
            <i class="sep"></i>
            <button class="tb" aria-label="Text rotation"><svg class="icon"><use href="#rotate"/></svg></button>
            <button class="drop dim" aria-label="Text rotation options"></button>
            <i class="sep"></i>
            <button class="tb" aria-label="Text color"><span class="glyph a">A</span></button>
            <button class="drop dim" aria-label="Text color options"></button>
            <button class="tb" aria-label="Text format"><span class="glyph ab">ab</span></button>
            <button class="more push" aria-label="More text buttons"></button>
        </div>
        <div class="toolbar">
            <button class="tb" aria-label="Align to grid"><svg class="icon"><use href="#d0"/></svg></button>
            <i class="sep"></i>
            <button class="tb" aria-label="Lefts"><svg class="icon"><use href="#d1"/></svg></button>
            <button class="tb" aria-label="Centers"><svg class="icon"><use href="#d2"/></svg></button>
            <button class="tb" aria-label="Rights"><svg class="icon"><use href="#d3"/></svg></button>
            <i class="sep"></i>
            <button class="tb" aria-label="Tops"><svg class="icon"><use href="#d4"/></svg></button>
            <button class="tb" aria-label="Middles"><svg class="icon"><use href="#d5"/></svg></button>
            <button class="tb" aria-label="Bottoms"><svg class="icon"><use href="#d6"/></svg></button>
            <i class="sep"></i>
            <button class="tb" aria-label="Same size"><svg class="icon"><use href="#d7"/></svg></button>
            <button class="tb" aria-label="Same width"><svg class="icon"><use href="#d8"/></svg></button>
            <button class="tb" aria-label="Same height"><svg class="icon"><use href="#d9"/></svg></button>
            <i class="sep"></i>
            <button class="tb" aria-label="Space horizontally"><svg class="icon"><use href="#d10"/></svg></button>
            <button class="tb" aria-label="Space vertically"><svg class="icon"><use href="#d11"/></svg></button>
            <i class="sep"></i>
            <button class="tb" aria-label="Center horizontally"><svg class="icon"><use href="#d12"/></svg></button>
            <button class="tb" aria-label="Center vertically"><svg class="icon"><use href="#d13"/></svg></button>
            <i class="sep"></i>
            <button class="tb" aria-label="Bring to front"><svg class="icon"><use href="#d14"/></svg></button>
            <button class="tb" aria-label="Send to back"><svg class="icon"><use href="#d15"/></svg></button>
            <i class="sep"></i>
            <button class="tb" aria-label="Move forward"><svg class="icon"><use href="#d16"/></svg></button>
            <button class="tb" aria-label="Move backward"><svg class="icon"><use href="#d17"/></svg></button>
            <i class="sep"></i>
            <button class="tb" aria-label="Lock"><svg class="icon"><use href="#lock"/></svg></button>
            <button class="tb" aria-label="Link"><svg class="icon"><use href="#link"/></svg></button>
            <button class="more push" aria-label="More layout buttons"></button>
        </div>
    </div>
</div>

<main class="workspace">
    <!-- Tool palette -->
    <aside class="palette">
        <button class="pb on" aria-label="Select"><svg class="icon"><use href="#cursor"/></svg></button>
        <button class="pb" aria-label="Hand"><svg class="icon"><use href="#hand"/></svg></button>
        <button class="pb" aria-label="Text editor"><svg class="icon"><use href="#texttool"/></svg></button>
        <button class="pb" aria-label="Copy style"><svg class="icon"><use href="#broom"/></svg></button>
        <hr>
        <button class="pb fly" aria-label="Bands"><svg class="icon"><use href="#bands"/></svg></button>
        <button class="pb fly" aria-label="Cross bands"><svg class="icon"><use href="#cross"/></svg></button>
        <button class="pb fly" aria-label="Components"><svg class="icon"><use href="#comps"/></svg></button>
        <hr>
        <button class="pb" aria-label="Report title"><svg class="icon"><use href="#rtitle"/></svg></button>
        <button class="pb" aria-label="Report summary"><svg class="icon"><use href="#rsum"/></svg></button>
        <button class="pb" aria-label="Page header"><svg class="icon"><use href="#phead"/></svg></button>
        <button class="pb" aria-label="Page footer"><svg class="icon"><use href="#pfoot"/></svg></button>
        <button class="pb" aria-label="Header"><svg class="icon"><use href="#bhead"/></svg></button>
        <button class="pb" aria-label="Footer"><svg class="icon"><use href="#bfoot"/></svg></button>
        <button class="pb" aria-label="Data"><svg class="icon"><use href="#bdata"/></svg></button>
        <button class="pb" aria-label="Table"><svg class="icon"><use href="#table"/></svg></button>
        <button class="pb" aria-label="Cross-tab"><svg class="icon"><use href="#crosstab"/></svg></button>
        <button class="pb" aria-label="Text"><svg class="icon"><use href="#tbox"/></svg></button>
        <button class="pb" aria-label="Image"><svg class="icon"><use href="#image"/></svg></button>
        <button class="pb" aria-label="Bar code"><svg class="icon"><use href="#barcode"/></svg></button>
        <button class="pb" aria-label="Panel"><svg class="icon"><use href="#panel"/></svg></button>
        <button class="pb" aria-label="Horizontal line"><svg class="icon"><use href="#hline"/></svg></button>
        <button class="pb" aria-label="Vertical line"><svg class="icon"><use href="#vline"/></svg></button>
        <button class="pb" aria-label="Rectangle"><svg class="icon"><use href="#rect"/></svg></button>
        <button class="pb" aria-label="Rounded rectangle"><svg class="icon"><use href="#rrect"/></svg></button>
        <button class="pb" aria-label="Chart"><svg class="icon"><use href="#chart"/></svg></button>
        <hr>
        <button class="pb" aria-label="Services"><svg class="icon"><use href="#tools"/></svg></button>
    </aside>

    <section class="designer">
        <div class="tabs">
            <button class="tab active"><svg class="icon"><use href="#tpage"/></svg>Page1</button>
            <button class="tab"><svg class="icon"><use href="#preview"/></svg>Preview</button>
            <button class="tab"><svg class="icon"><use href="#tweb"/></svg>Web náhľad</button>
            <button class="tab"><svg class="icon"><use href="#tsilver"/></svg>Silverlight náhľad</button>
            <button class="tab"><svg class="icon"><use href="#thtml"/></svg>HTML Preview</button>
        </div>
        <div class="canvas">
            <div class="hruler"><div class="scale" id="hscale"></div></div>
            <div class="vruler"><div class="scale" id="vscale"></div><i class="marker"></i></div>
            <div class="sheetarea">
                <div class="sheet">
                    <svg class="sheetgrid" id="sheetGrid" width="618" height="876">
                        <text class="watermark" transform="translate(173 628) rotate(-45)">DEMO</text>
                    </svg>
                </div>
            </div>
            <div class="scrollbar">
                <button class="arrow up" aria-label="Scroll up"></button>
                <div class="thumb"></div>
                <button class="arrow down" aria-label="Scroll down"></button>
            </div>
        </div>
    </section>

    <!-- Dictionary panel -->
    <aside class="dictionary">
        <div class="panelhead">
            <h2>Dictionary</h2>
            <button aria-label="Pin panel"><svg viewBox="0 0 10 10"><path d="M3 0h4.500v5M3 0v5M1 5.500h8M5 6v4M6.500 0v5" fill="none" stroke="#fff" stroke-width="1.300"/></svg></button>
            <button aria-label="Close panel"><svg viewBox="0 0 10 10"><path d="M1 1.500l8 7M9 1.500l-8 7" stroke="#fff" stroke-width="1.800"/></svg></button>
        </div>
        <div class="paneltools">
            <button class="actions">Actions</button>
            <button class="drop blue" aria-label="Actions menu"></button>
            <button class="tb" aria-label="New item"><svg class="icon"><use href="#newitem"/></svg></button>
            <button class="drop blue" aria-label="New item menu"></button>
            <button class="tb" aria-label="Edit"><svg class="icon"><use href="#edit"/></svg></button>
            <button class="tb" aria-label="Delete item"><svg class="icon"><use href="#redx"/></svg></button>
            <i class="sep"></i>
            <button class="tb" aria-label="Move up"><svg class="icon"><use href="#up"/></svg></button>
            <button class="tb" aria-label="Move down"><svg class="icon"><use href="#down"/></svg></button>
            <button class="tb" aria-label="Sort"><svg class="icon"><use href="#sort"/></svg></button>
            <button class="drop blue" aria-label="Sort menu"></button>
        </div>
        <ul class="tree">
            <li><i class="box minus"></i><svg class="icon"><use href="#table"/></svg><span>Data Sources</span></li>
            <li class="child"><i class="dots"></i><svg class="icon"><use href="#db"/></svg><span class="sel">Connection [Xml Data]</span></li>
            <li><i class="dots"></i><svg class="icon"><use href="#bo"/></svg><span>Business Objects</span></li>
            <li><i class="dots"></i><svg class="icon"><use href="#var"/></svg><span>Variables</span></li>
            <li><i class="box plus"></i><svg class="icon"><use href="#sysvar"/></svg><span>System Variables</span></li>
            <li><i class="box plus"></i><svg class="icon"><use href="#fx"/></svg><span>Functions</span></li>
        </ul>
        <div class="options">
            <label><input type="checkbox" checked>Create Field on Double Click</label>
            <label><input type="checkbox" checked>Create Label</label>
            <label><input type="checkbox">Use Aliases</label>
        </div>
        <div class="paneltabs">
            <button><svg class="icon"><use href="#props"/></svg>Properties</button>
            <button class="active"><svg class="icon"><use href="#dict"/></svg>Dictionary</button>
            <button><svg class="icon"><use href="#rtree"/></svg>Report Tree</button>
        </div>
    </aside>
</main>

<div class="statusbar">
    <button>Centimeters</button><i class="uparrow"></i>
    <i class="sep"></i>
    <button class="checker"><i class="play"></i>Report Checker</button>
    <i class="sep"></i>
    <span>Page1</span>
    <i class="sep"></i>
    <span>X:14,95&nbsp; Y:27,41</span>
</div>

<footer class="taskbar">
    <button class="start"><svg class="icon"><use href="#flag"/></svg>Start</button>
    <div class="quick">
        <button aria-label="Internet Explorer"><svg class="icon"><use href="#ie"/></svg></button>
        <button aria-label="Media Player"><svg class="icon"><use href="#wmp"/></svg></button>
        <button aria-label="Explorer"><svg class="icon"><use href="#explorer"/></svg></button>
    </div>
    <button class="task"><svg class="icon"><use href="#ff"/></svg>unable to add xml data s...</button>
    <button class="task"><svg class="icon"><use href="#fc"/></svg>Bin - FreeCommander</button>
    <button class="task active"><svg class="icon"><use href="#app"/></svg>Report.mrt - Designer</button>
    <span class="lang">EN</span>
    <div class="tray">
        <div class="trayicons">
            <svg class="icon"><use href="#t1"/></svg>
            <svg class="icon"><use href="#t2"/></svg>
            <svg class="icon"><use href="#t3"/></svg>
            <svg class="icon"><use href="#t4"/></svg>
            <svg class="icon"><use href="#t5"/></svg>
            <svg class="icon"><use href="#t6"/></svg>
            <svg class="icon"><use href="#t7"/></svg>
            <svg class="icon"><use href="#t8"/></svg>
            <svg class="icon"><use href="#t9"/></svg>
            <svg class="icon"><use href="#t10"/></svg>
            <svg class="icon"><use href="#t11"/></svg>
        </div>
        <div class="clock"><span>9:13</span><span>19. 7. 2011</span></div>
        <svg class="icon"><use href="#desk"/></svg>
    </div>
</footer>

<!-- New Data Source window -->
<form class="dialog" role="dialog" aria-labelledby="dialogTitle">
    <div class="dialoghead">
        <svg class="icon"><use href="#app"/></svg>
        <h2 id="dialogTitle">New Data Source</h2>
        <button type="button" class="winbtn" aria-label="Close dialog"><svg viewBox="0 0 10 10"><path d="M1 1l8 8M9 1L1 9" stroke="#000" stroke-width="1.700"/></svg></button>
    </div>
    <div class="dialogbody">
        <div class="fields">
            <label for="nameInSource">Name in Source:</label>
            <div class="field wide"><input type="text" id="nameInSource"><button type="button" aria-label="Browse">...</button></div>
            <label for="dsName">Name:</label>
            <div class="field"><input type="text" id="dsName" value="DataSource1"></div>
            <label for="dsAlias">Alias:</label>
            <div class="field"><input type="text" id="dsAlias" value="DataSource1"></div>
        </div>

        <div class="strip">
            <button type="button" aria-label="Run query"><svg class="icon"><use href="#run"/></svg></button>
            <button type="button" class="sql">SQL</button>
            <button type="button" aria-label="View query"><svg class="icon"><use href="#qview"/></svg></button>
            <button type="button" aria-label="Query builder"><svg class="icon"><use href="#qbuild"/></svg></button>
            <button type="button" class="label">Run Query Builder</button>
        </div>

        <fieldset class="query">
            <legend>Query Text</legend>
            <textarea aria-label="Query Text"></textarea>
            <div class="typerow">
                <label for="dsType">Type</label>
                <div class="combo3d"><select id="dsType"><option>Table</option></select></div>
            </div>
        </fieldset>

        <div class="strip">
            <button type="button" aria-label="New column"><svg class="icon"><use href="#newcol"/></svg></button>
            <button type="button" aria-label="New calculated column"><svg class="icon"><use href="#newcalc"/></svg></button>
            <button type="button" aria-label="New parameter"><svg class="icon"><use href="#newparam"/></svg></button>
            <button type="button" aria-label="Delete column"><svg class="icon"><use href="#redx"/></svg></button>
            <i class="gsep"></i>
            <button type="button" class="label near">Retrieve Columns</button>
        </div>

        <fieldset class="columns">
            <legend>Columns</legend>
            <ul class="collist">
                <li><svg class="icon"><use href="#col"/></svg><span class="sel">Columns</span></li>
                <li><svg class="icon"><use href="#param"/></svg><span>Parameters</span></li>
            </ul>
            <div class="propgrid">
                <div class="proptools">
                    <button type="button" class="on" aria-label="Categorized"><svg class="icon"><use href="#categ"/></svg></button>
                    <button type="button" aria-label="Alphabetical"><svg class="icon"><use href="#sort"/></svg></button>
                    <i class="gsep"></i>
                    <button type="button" aria-label="Properties list"><svg class="icon"><use href="#list"/></svg></button>
                    <button type="button" aria-label="Events"><svg class="icon"><use href="#bolt"/></svg></button>
                    <i class="gsep"></i>
                    <button type="button" aria-label="Property pages"><svg class="icon"><use href="#ppage"/></svg></button>
                </div>
                <div class="propvalues"></div>
                <div class="prophelp"></div>
            </div>
        </fieldset>

        <div class="buttons">
            <button type="button" class="push3d default">OK</button>
            <button type="button" class="push3d">Cancel</button>
        </div>
    </div>
    <svg class="sizegrip" viewBox="0 0 13 13"><path d="M1 13L13 1M5 13l8-8M9 13l4-4" stroke="#808080" stroke-width="1.800"/><path d="M0 13L13 0M4 13l9-9M8 13l5-5" stroke="#fff" stroke-width=".8"/></svg>
</form>

<script src="script.js"></script>
</body>
</html>
```
FILE: styles.css
```css
* {
    box-sizing: border-box;
}

body {
    margin: 0;
    height: 100vh;
    display: flex;
    flex-direction: column;
    overflow: hidden;
    font-family: "Liberation Sans", Arial, sans-serif;
    font-size: 11px;
    background: #bfdbff;
    color: #000;
}

h1, h2, ul {
    margin: 0;
    padding: 0;
    font-size: 11px;
    list-style: none;
}

button, input, select, textarea {
    font: inherit;
    color: inherit;
    margin: 0;
    padding: 0;
    border: 0;
    background: none;
    border-radius: 0;
}

i {
    font-style: normal;
}

.sprite {
    position: absolute;
    width: 0;
    height: 0;
}

.icon {
    width: 16px;
    height: 16px;
    flex: none;
    display: block;
}

/* Title bar */
.titlebar {
    height: 19px;
    flex: none;
    display: flex;
    align-items: center;
    gap: 2px;
    padding: 0 2px;
    background: linear-gradient(to right, #808080, #c0c0c0);
    border-bottom: 1px solid #d4d0c8;
    color: #d4d0c8;
}

.titlebar h1, .dialoghead h2 {
    flex: 1;
    font-family: "DejaVu Sans Condensed", "DejaVu Sans", sans-serif;
    font-weight: bold;
}

.winbtns {
    display: flex;
}

.winbtn {
    width: 16px;
    height: 14px;
    display: flex;
    align-items: center;
    justify-content: center;
    background: #d4d0c8;
    border: 1px solid;
    border-color: #fff #404040 #404040 #fff;
    box-shadow: inset -1px -1px #808080;
}

.winbtn svg {
    width: 9px;
    height: 9px;
}

.winbtn.close {
    margin-left: 2px;
}

/* Menu */
.menubar {
    height: 25px;
    flex: none;
    display: flex;
    align-items: center;
    gap: 18px;
    padding: 0 0 2px 10px;
}

.menubar a {
    color: #15428b;
    text-decoration: none;
}

/* Toolbars */
.toolbars {
    flex: none;
    display: flex;
    flex-direction: column;
    gap: 2px;
    padding-bottom: 1px;
}

.toolrow {
    display: flex;
    gap: 4px;
}

.toolbar {
    height: 27px;
    display: flex;
    align-items: center;
    padding-left: 7px;
    background: linear-gradient(#e3efff, #d3e5ff 50%, #b6d3fd);
    border-bottom: 1px solid #6f9dd9;
    border-radius: 3px 4px 4px 3px;
    position: relative;
}

.toolbar::before {
    content: "";
    position: absolute;
    left: 3px;
    top: 5px;
    width: 2px;
    height: 18px;
    background: repeating-linear-gradient(#6f9dd9 0 2px, transparent 2px 4px);
}

.tb {
    width: 25px;
    height: 23px;
    flex: none;
    display: flex;
    align-items: center;
    justify-content: center;
}

.tb.on, .pb.on {
    background: linear-gradient(#fbc761, #ffd07c 60%, #ffd98e);
    border: 1px solid #a8641c;
}

.sep {
    width: 3px;
    height: 19px;
    flex: none;
    border-left: 1px solid #9ebfee;
    box-shadow: inset 1px 0 #fff;
}

.drop {
    width: 13px;
    height: 20px;
    flex: none;
    display: flex;
    align-items: center;
    justify-content: center;
}

.drop::before, .combo::after, .combo3d::after {
    content: "";
    border: 3px solid transparent;
    border-top-color: #000;
    border-bottom: 0;
}

.drop.dim::before {
    border-top-color: #8793a8;
}

.drop.blue::before {
    border-top-color: #15428b;
}

.more {
    width: 12px;
    align-self: stretch;
    flex: none;
    display: flex;
    flex-direction: column;
    align-items: center;
    justify-content: flex-end;
    gap: 2px;
    padding-bottom: 4px;
    background: linear-gradient(#b4d0f8, #6e98d8);
    border-radius: 0 4px 4px 0;
}

.more.push {
    margin-left: 5px;
}

.more::before {
    content: "";
    width: 5px;
    height: 1px;
    background: #000;
}

.more::after {
    content: "";
    border: 3px solid transparent;
    border-top-color: #000;
    border-bottom: 0;
}

.combo {
    position: relative;
    height: 20px;
    background: #e9f2ff;
    border: 1px solid #abc3e8;
    display: flex;
}

.combo select {
    appearance: none;
    width: 100%;
    padding-left: 2px;
    outline: 0;
}

.combo::after {
    position: absolute;
    right: 5px;
    top: 8px;
    border-top-color: #15428b;
}

.combo.off {
    background: #d4d0c8;
}

.combo.off::after {
    border-top-color: #8d8a84;
}

.combo.zoom {
    width: 70px;
    margin-left: 5px;
}

.combo.style {
    width: 68px;
    background: #fff;
    margin: 0 10px 0 2px;
}

.combo.style::after {
    right: -9px;
    border-top-color: #000;
}

.combo.font {
    width: 130px;
    margin: 0 5px 0 3px;
}

.combo.size {
    width: 50px;
    margin-right: 1px;
}

.textbtn {
    width: 66px;
    height: 22px;
}

.linestyle {
    width: 61px;
    height: 14px;
    margin-left: 5px;
    border: 1px solid #000;
    background: linear-gradient(#fff 0 5px, #000 5px 7px, #fff 7px);
}

.glyph {
    font-family: "Liberation Serif", serif;
    font-size: 15px;
    line-height: 16px;
    color: #76849c;
}

.glyph.b {
    font-weight: bold;
}

.glyph.i {
    font-weight: bold;
    font-style: italic;
}

.glyph.u {
    text-decoration: underline;
    font-weight: bold;
}

.glyph.a {
    font-size: 16px;
    color: #8b97ab;
    border-bottom: 2px solid #dfe4ec;
}

.glyph.ab {
    font-family: "Liberation Sans", sans-serif;
    font-size: 11px;
    line-height: 11px;
    color: #000;
    background: #fff56a;
    border-bottom: 2px solid #9c8a30;
}

.glyph.aa {
    font-style: italic;
    font-weight: bold;
    font-size: 13px;
    color: #3465a4;
    text-decoration: underline;
}

.glyph.aa b {
    color: #5a3c8c;
}

/* Work area */
.workspace {
    flex: 1;
    min-height: 0;
    display: flex;
    border-bottom: 1px solid #5c84c0;
}

.palette {
    width: 28px;
    flex: none;
    align-self: flex-start;
    margin: 2px 2px 0 0;
    padding: 6px 1px 1px;
    background: linear-gradient(#e3efff, #d3e5ff 50%, #a9cafa);
    border-bottom: 1px solid #6f9dd9;
    border-radius: 3px;
    position: relative;
}

.palette::before {
    content: "";
    position: absolute;
    left: 4px;
    top: 2px;
    width: 18px;
    height: 2px;
    background: repeating-linear-gradient(to right, #6f9dd9 0 2px, transparent 2px 4px);
}

.palette hr {
    height: 2px;
    margin: 0 1px;
    border: 0;
    border-top: 1px solid #9ebfee;
    background: #fff;
}

.pb {
    width: 26px;
    height: 23px;
    display: flex;
    align-items: center;
    justify-content: center;
}

.pb.fly {
    height: 34px;
    flex-direction: column;
    gap: 4px;
}

.pb.fly::after {
    content: "";
    border: 4px solid transparent;
    border-left-color: #000;
    border-right: 0;
    margin-left: 2px;
}

.designer {
    flex: 1;
    min-width: 0;
    display: flex;
    flex-direction: column;
}

.tabs {
    height: 25px;
    flex: none;
    display: flex;
    padding-top: 2px;
    background: linear-gradient(#e1eeff, #b2d1fc);
    border-bottom: 1px solid #8caad6;
    overflow: hidden;
}

.tab {
    position: relative;
    display: flex;
    align-items: center;
    gap: 5px;
    padding: 0 9px 4px 2px;
    color: #15428b;
    border-left: 1px solid #8caad6;
    border-top: 1px solid #8caad6;
    border-radius: 5px 0 0 0;
    background: #c6dcfa;
    isolation: isolate;
}

.tab::after {
    content: "";
    position: absolute;
    z-index: -1;
    top: -1px;
    bottom: -1px;
    right: -2px;
    width: 20px;
    background: inherit;
    border-top: 1px solid #8caad6;
    border-right: 1px solid #8caad6;
    border-radius: 0 4px 0 0;
    transform: skewX(36deg);
}

.tab.active {
    z-index: 1;
    padding-left: 4px;
    background: #fff;
    font-weight: bold;
}

.canvas {
    flex: 1;
    min-height: 0;
    display: grid;
    grid-template: 21px 1fr / 30px 1fr 16px;
    background: #96b4df;
}

.hruler {
    grid-column: 1 / 4;
    padding: 4px 0 2px 30px;
    background: #9bb9e1;
}

.hruler .scale {
    width: 620px;
    height: 15px;
    display: flex;
    padding: 0 15px 0 14px;
    border: 1px solid #c6d9f4;
    background: linear-gradient(to right, #aec8ec 28px, #fff 28px 590px, #aec8ec 590px);
}

.scale span {
    flex: 1;
    display: flex;
    align-items: center;
    justify-content: center;
    font-size: 9px;
    color: #666;
    position: relative;
}

.scale span::after {
    content: "";
    position: absolute;
    background: #555;
}

.hruler span::after {
    right: 0;
    top: 2px;
    width: 1px;
    height: 9px;
}

.hruler span:last-child::after {
    display: none;
}

.vruler {
    position: relative;
    padding: 10px 0 0 3px;
    overflow: hidden;
}

.vruler .scale {
    width: 15px;
    height: 842px;
    display: flex;
    flex-direction: column;
    padding: 14px 0 0;
    border: 1px solid #c6d9f4;
    background: linear-gradient(#aec8ec 29px, #fff 29px);
}

.vruler span::after {
    bottom: 0;
    left: 2px;
    width: 9px;
    height: 1px;
}

.marker {
    position: absolute;
    left: 4px;
    top: 385px;
    width: 13px;
    height: 5px;
    background: #fccf85;
}

.sheetarea {
    padding-top: 10px;
    overflow: hidden;
}

.sheet {
    width: 620px;
    height: 880px;
    background: #fff;
    border: 1px solid #000;
    box-shadow: 2px 2px 2px #5878a8;
}

.sheetgrid {
    display: block;
}

.sheetgrid path {
    fill: none;
    stroke: #dadada;
    shape-rendering: crispEdges;
}

.sheetgrid .major {
    stroke: #b9b9b9;
}

.sheetgrid .frame {
    stroke: #777;
}

.watermark {
    font-size: 154px;
    font-weight: bold;
    fill: #000;
    fill-opacity: 0.08;
}

.scrollbar {
    display: flex;
    flex-direction: column;
    background: #f3f4f6;
    border: 1px solid #dfe6f0;
    padding: 0 1px;
}

.arrow {
    height: 17px;
    display: flex;
    align-items: center;
    justify-content: center;
}

.arrow::before {
    content: "";
    border: 4px solid transparent;
    border-top: 0;
    border-bottom: 5px solid #4c6290;
}

.arrow.down::before {
    border-bottom: 0;
    border-top: 5px solid #4c6290;
}

.thumb {
    flex: 1;
    margin-bottom: 42px;
    display: flex;
    align-items: center;
    justify-content: center;
    background: linear-gradient(to right, #e4e9f2 60%, #c6cfe0 60%);
    border: 1px solid #6a7ca4;
    border-radius: 2px;
}

.thumb::before {
    content: "";
    width: 7px;
    height: 8px;
    background: repeating-linear-gradient(#5f7299 0 1px, transparent 1px 2px);
}

/* Dictionary panel */
.dictionary {
    width: 298px;
    flex: none;
    margin: 0 1px 0 5px;
    display: flex;
    flex-direction: column;
    color: #15428b;
}

.panelhead {
    height: 20px;
    display: flex;
    align-items: center;
    gap: 8px;
    padding: 0 4px 0 6px;
    background: linear-gradient(#6592cd, #3b67a5);
    color: #fff;
}

.panelhead h2 {
    flex: 1;
    font-weight: normal;
}

.panelhead svg {
    display: block;
    width: 9px;
    height: 9px;
}

.paneltools {
    height: 28px;
    margin: 0 3px 0 2px;
    display: flex;
    align-items: center;
    padding: 2px 0 0 5px;
    background: linear-gradient(#e3efff, #b6d3fd);
    border-bottom: 1px solid #6f9dd9;
    border-radius: 3px;
}

.paneltools .tb {
    width: 24px;
}

.actions {
    width: 43px;
    text-align: left;
}

.tree {
    flex: 1;
    margin: 1px 4px 0 2px;
    padding: 0 0 0 8px;
    background: #fff;
    border: 1px solid;
    border-color: #404040 #d4d0c8 #d4d0c8 #404040;
    color: #000;
}

.tree li {
    height: 16px;
    display: flex;
    align-items: center;
}

.tree .icon {
    width: 15px;
    height: 15px;
    margin-right: 3px;
}

.tree .box {
    position: relative;
    width: 9px;
    height: 9px;
    margin-right: 7px;
    border: 1px solid #808080;
    background: linear-gradient(#000, #000) center / 5px 1px no-repeat;
}

.tree .box.plus {
    background: linear-gradient(#000, #000) center / 5px 1px no-repeat,
        linear-gradient(#000, #000) center / 1px 5px no-repeat;
}

.tree .box::after {
    content: "";
    position: absolute;
    left: 9px;
    top: 3px;
    width: 5px;
    border-top: 1px dotted #808080;
}

.tree .dots {
    width: 11px;
    height: 16px;
    margin: 0 1px 0 4px;
    border-left: 1px dotted #808080;
    background: repeating-linear-gradient(to right, #808080 0 1px, transparent 1px 2px) 0 8px / 100% 1px no-repeat;
}

.tree .child .dots {
    height: 9px;
    margin-bottom: 7px;
}

.tree .child::before {
    content: "";
    height: 16px;
    margin: 0 13px 0 4px;
    border-left: 1px dotted #808080;
}

.tree span {
    padding: 2px;
}

.sel {
    background: #d4d0c8;
}

.options {
    display: flex;
    flex-direction: column;
    padding-left: 5px;
    height: 51px;
}

.options label {
    height: 16px;
    display: flex;
    align-items: center;
    gap: 6px;
}

.options input {
    appearance: none;
    width: 12px;
    height: 12px;
    border: 1px solid #8e9cb2;
    background: linear-gradient(135deg, #c6ccd6, #f6f7f9);
    box-shadow: inset 0 0 0 1px #f4f4f4;
    display: flex;
    justify-content: center;
}

.options input:checked::before {
    content: "";
    width: 4px;
    height: 7px;
    border: solid #34508a;
    border-width: 0 2px 2px 0;
    transform: rotate(40deg);
}

.paneltabs {
    height: 25px;
    display: flex;
    gap: 2px;
    padding-left: 5px;
    border-top: 1px solid #7fa2d8;
    background: linear-gradient(#d6e6ff, #b6d3fd);
}

.paneltabs button {
    height: 21px;
    display: flex;
    align-items: center;
    gap: 4px;
    padding: 0 3px 0 2px;
    border: 1px solid #7fa2d8;
    border-top: 0;
    border-radius: 0 0 5px 5px;
    background: linear-gradient(#dbe9ff, #c2d9fa);
    box-shadow: inset 0 0 0 1px #eef5ff;
}

.paneltabs .active {
    background: #fff;
}

/* Status bar */
.statusbar {
    height: 29px;
    flex: none;
    display: flex;
    align-items: center;
    gap: 4px;
    padding: 0 0 4px 13px;
    background: repeating-linear-gradient(#6f9dd9 0 2px, transparent 2px 4px) 3px 4px / 2px 18px no-repeat,
        linear-gradient(#d7e6f9, #c7dcf8 35%, #b3d0f5 38%, #d7e5f7 85%, #cddff7);
    border-bottom: 1px solid #f4f4f4;
    color: #15428b;
}

.statusbar button {
    display: flex;
    align-items: center;
    gap: 7px;
    color: #000;
}

.statusbar .checker {
    margin-right: 2px;
}

.play {
    border: 6px solid transparent;
    border-left: 7px solid #1e8c2c;
    border-right: 0;
}

.uparrow {
    margin: 0 5px 0 8px;
    border: 3px solid transparent;
    border-bottom-color: #000;
    border-top: 0;
}

/* Taskbar */
.taskbar {
    height: 50px;
    flex: none;
    display: flex;
    align-items: flex-start;
    gap: 2px;
    padding: 2px;
    background: #d4d0c8;
}

.start, .task {
    height: 22px;
    display: flex;
    align-items: center;
    gap: 4px;
    border: 1px solid;
    border-color: #fff #404040 #404040 #fff;
    box-shadow: inset -1px -1px #808080;
}

.start {
    width: 52px;
    gap: 1px;
    font-family: "DejaVu Sans Condensed", "DejaVu Sans", sans-serif;
    font-weight: bold;
}

.quick {
    display: flex;
    gap: 18px;
    padding: 3px 8px 0 15px;
}

.task {
    width: 160px;
    padding-left: 4px;
}

.task.active {
    font-family: "DejaVu Sans Condensed", "DejaVu Sans", sans-serif;
    font-weight: bold;
    background: #fff;
    border-color: #404040 #fff #fff #404040;
    box-shadow: none;
}

.lang {
    margin-left: auto;
    height: 22px;
    line-height: 22px;
    padding-right: 5px;
    border-right: 1px solid #808080;
}

.tray {
    width: 233px;
    height: 46px;
    display: flex;
    align-items: center;
    padding: 0 1px 0 7px;
    border: 1px solid;
    border-color: #808080 #fff #fff #808080;
}

.trayicons {
    width: 144px;
    display: flex;
    flex-wrap: wrap;
    gap: 6px 8px;
}

.clock {
    flex: 1;
    display: flex;
    flex-direction: column;
    align-items: center;
    gap: 6px;
}

/* Dialog */
.dialog {
    position: absolute;
    left: 725px;
    top: 284px;
    width: 504px;
    padding: 3px 3px 9px;
    background: #d4d0c8;
    border: 1px solid;
    border-color: #d4d0c8 #404040 #404040 #d4d0c8;
    box-shadow: inset 1px 1px #fff, inset -1px -1px #808080;
}

.dialoghead {
    height: 18px;
    display: flex;
    align-items: center;
    gap: 2px;
    padding: 0 2px;
    background: linear-gradient(to right, #0a246a, #a6caf0);
    color: #fff;
}

.dialogbody {
    padding: 9px 8px 0;
}

.fields {
    display: grid;
    grid-template-columns: 133px 1fr;
    row-gap: 4px;
    align-items: center;
    padding-left: 3px;
}

.fields label {
    padding-top: 1px;
}

.field {
    width: 224px;
    height: 20px;
    display: flex;
}

.field, .query textarea, .combo3d, .collist {
    background: #fff;
    border: 1px solid;
    border-color: #808080 #fff #fff #808080;
    box-shadow: inset 1px 1px #404040, inset -1px -1px #d4d0c8;
}

.field.wide {
    width: auto;
}

.field input {
    flex: 1;
    min-width: 0;
    padding: 0 2px 1px;
    outline: 0;
}

.field button {
    width: 17px;
    margin: 1px;
    line-height: 12px;
    font-weight: bold;
    background: #d4d0c8;
    border: 1px solid;
    border-color: #fff #404040 #404040 #fff;
}

.strip {
    height: 28px;
    display: flex;
    align-items: center;
    padding-left: 12px;
    background: repeating-linear-gradient(#404040 0 2px, transparent 2px 4px) 4px 7px / 2px 14px no-repeat,
        linear-gradient(#efece5, #cbc7bd);
    border-right: 1px solid #b0aca0;
}

.fields + .strip {
    margin-top: 12px;
}

.query + .strip {
    height: 27px;
}

.strip button {
    width: 22px;
    height: 22px;
    display: flex;
    align-items: center;
    justify-content: center;
}

.strip button.sql {
    font-family: "Liberation Serif", serif;
    font-weight: bold;
    font-size: 10px;
}

.strip button.label {
    width: auto;
    margin-left: 12px;
}

.strip button.near {
    margin-left: 7px;
}

.gsep {
    width: 2px;
    height: 18px;
    margin: 0 2px 0 4px;
    border-left: 1px solid #808080;
    background: #fff;
}

fieldset {
    margin: 0;
    min-width: 0;
    border: 1px solid #808080;
    box-shadow: inset 1px 0 #fff, 1px 1px #fff;
    padding: 0 3px 4px;
}

legend {
    margin-left: 5px;
    padding: 0 4px 0 3px;
    line-height: 14px;
}

.query {
    margin-bottom: 5px;
}

.query textarea {
    display: block;
    width: 100%;
    height: 78px;
    margin-top: 2px;
    resize: none;
    outline: 0;
}

.typerow {
    display: flex;
    align-items: center;
    padding: 7px 0 0 2px;
}

.typerow label {
    width: 130px;
}

.combo3d {
    position: relative;
    width: 168px;
    height: 21px;
}

.combo3d select {
    appearance: none;
    width: 100%;
    height: 18px;
    padding-left: 4px;
    outline: 0;
}

.combo3d::before {
    content: "";
    position: absolute;
    right: 1px;
    top: 1px;
    width: 16px;
    height: 17px;
    background: #d4d0c8;
    border: 1px solid;
    border-color: #fff #404040 #404040 #fff;
    box-shadow: inset -1px -1px #808080;
    pointer-events: none;
}

.combo3d::after {
    position: absolute;
    right: 5px;
    top: 7px;
    border-width: 4px 4px 0;
    pointer-events: none;
}

.columns {
    padding: 0 2px 2px;
}

.columns legend {
    line-height: 12px;
}

.collist {
    float: left;
    width: 229px;
    height: 202px;
    padding: 1px 4px;
}

.collist li {
    height: 16px;
    display: flex;
    align-items: center;
    gap: 2px;
}

.collist span {
    padding: 2px;
}

.propgrid {
    margin-left: 233px;
    height: 202px;
    display: flex;
    flex-direction: column;
    gap: 3px;
}

.proptools {
    height: 24px;
    display: flex;
    align-items: center;
    padding-left: 1px;
    border-bottom: 1px solid #808080;
}

.proptools button {
    width: 22px;
    height: 21px;
    display: flex;
    align-items: center;
    justify-content: center;
}

.proptools .on {
    background: #ebe9e4;
    border: 1px solid;
    border-color: #808080 #fff #fff #808080;
}

.propvalues {
    flex: 1;
    background: #fff;
    border: 1px solid #808080;
}

.prophelp {
    height: 59px;
    border: 1px solid #808080;
}

.buttons {
    display: flex;
    justify-content: flex-end;
    gap: 5px;
    padding: 11px 6px 0 0;
}

.push3d {
    width: 75px;
    height: 23px;
    border: 1px solid;
    border-color: #fff #404040 #404040 #fff;
    box-shadow: inset -1px -1px #808080;
}

.push3d.default {
    border-color: #000;
    box-shadow: inset 1px 1px #fff, inset -1px -1px #404040, inset -2px -2px #808080;
}

.sizegrip {
    position: absolute;
    right: 3px;
    bottom: 3px;
    width: 13px;
    height: 13px;
}
```
FILE: script.js
```js
// Ruler labels, one cell per centimeter
function fillScale(id, last) {
    const scale = document.getElementById(id);
    for (let i = 0; i <= last; i++) {
        const cell = document.createElement('span');
        cell.textContent = i;
        scale.appendChild(cell);
    }
}

fillScale('hscale', 19);
fillScale('vscale', 27);

// Page grid: a line every 2 mm, every second one is darker
function drawGrid() {
    const grid = document.getElementById('sheetGrid');
    const left = 28.5;
    const top = 28.5;
    const width = 561;
    const height = 860;
    const step = width / 95;
    let minor = '';
    let major = '';
    for (let i = 1; i < 95; i++) {
        const line = 'M' + (left + Math.round(i * step)) + ' ' + top + 'v' + height;
        if (i % 2) { minor += line; } else { major += line; }
    }
    for (let i = 1; i * step < height; i++) {
        const line = 'M' + left + ' ' + (top + Math.round(i * step)) + 'h' + width;
        if (i % 2) { minor += line; } else { major += line; }
    }
    addPath(grid, 'minor', minor);
    addPath(grid, 'major', major);
    addPath(grid, 'frame', 'M' + left + ' ' + (top + height) + 'V' + top + 'h' + width + 'v' + height);
}

function addPath(grid, name, d) {
    const path = document.createElementNS('http://www.w3.org/2000/svg', 'path');
    path.setAttribute('class', name);
    path.setAttribute('d', d);
    grid.insertBefore(path, grid.querySelector('text'));
}

drawGrid();
```
